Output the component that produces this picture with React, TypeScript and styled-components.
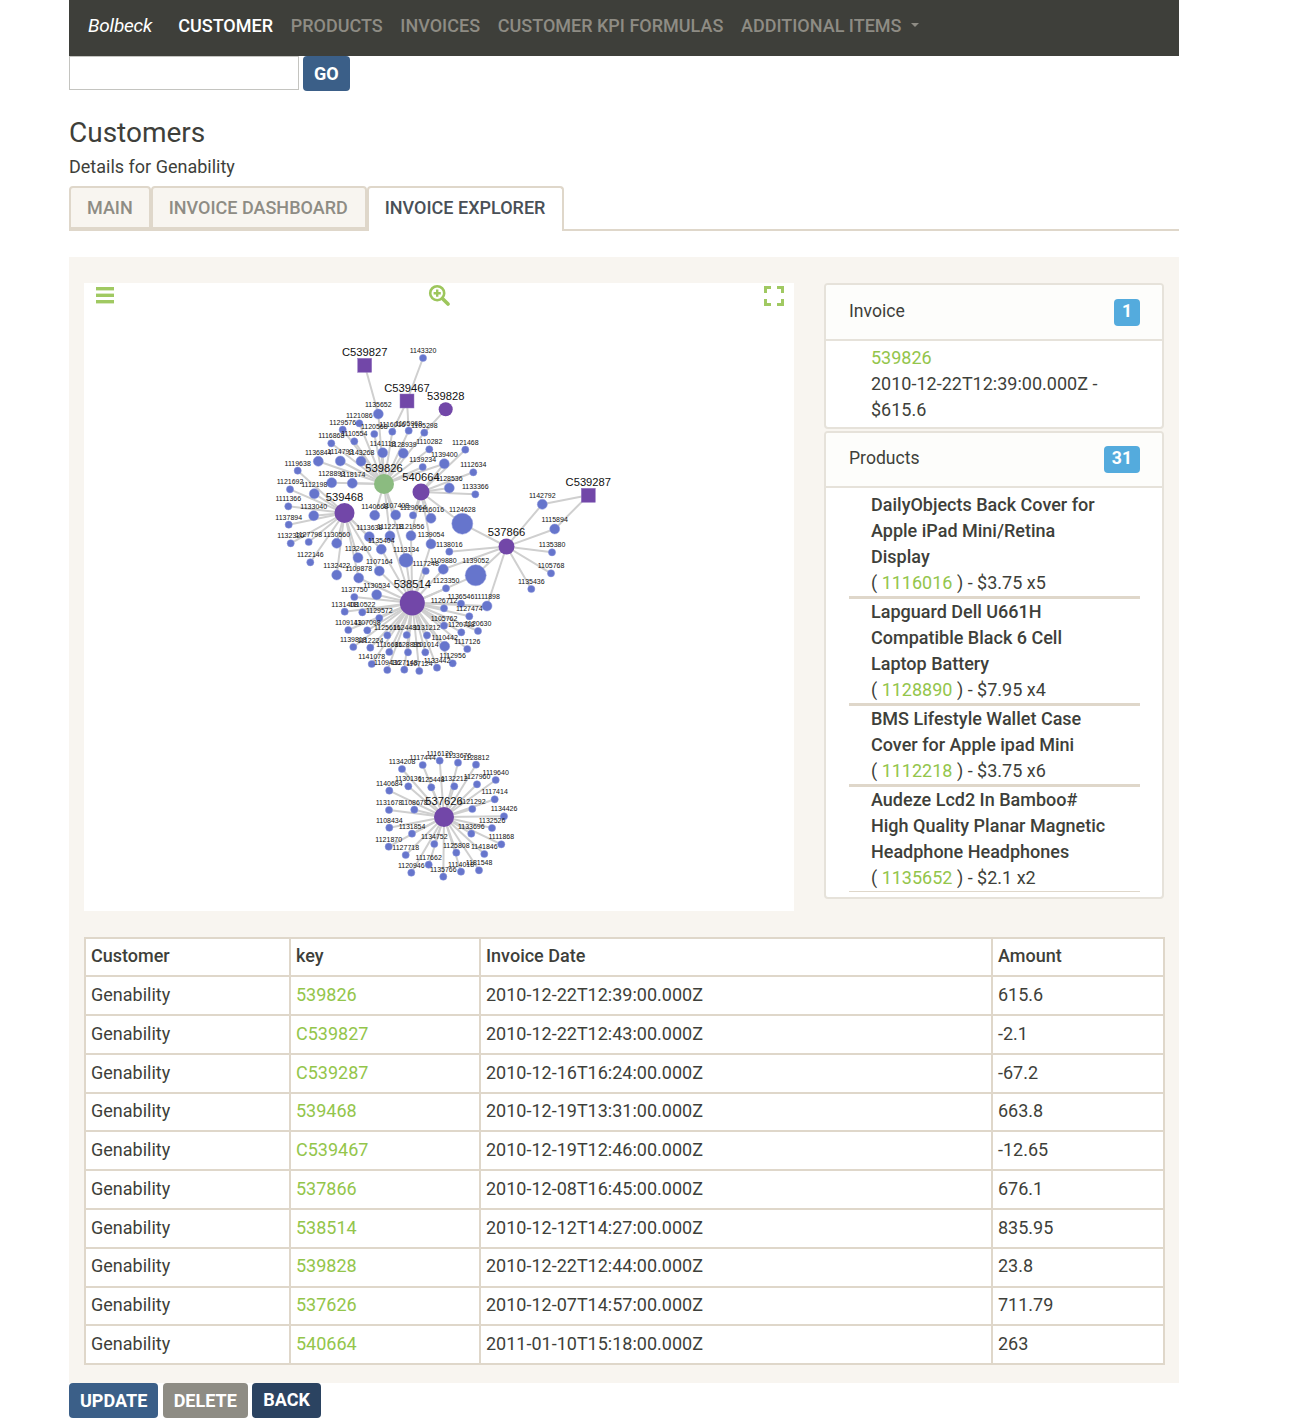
import React from 'react'
import styled, { createGlobalStyle } from 'styled-components'

const GlobalStyle = createGlobalStyle`
  html, body {
    margin: 0;
    padding: 0;
    background: #fff;
    color: #3e3f3a;
    font-family: Roboto, "Liberation Sans", sans-serif;
    font-size: 18px;
    line-height: 26.4px;
  }
  * { box-sizing: border-box; }
`

const Page = styled.div`
  width: 1110px;
  margin-left: 69px;
`

const Navbar = styled.nav`
  display: flex;
  align-items: center;
  height: 56px;
  padding: 0 0 4px 19px;
  background: #3e3f3a;
`

const Brand = styled.a`
  margin-right: 26px;
  color: #fff;
  font-size: 19px;
  font-style: italic;
  letter-spacing: -0.2px;
`

const NavItems = styled.div`
  display: flex;
  gap: 17.7px;
`

const NavItem = styled.a<{ $active?: boolean }>`
  display: flex;
  align-items: center;
  color: ${(p) => (p.$active ? '#fff' : '#8e8c84')};
  font-size: 18px;
  font-weight: 500;
  text-transform: uppercase;
`

const Caret = styled.span`
  width: 0;
  height: 0;
  margin-left: 10px;
  margin-bottom: 2px;
  border-top: 4.5px solid #8e8c84;
  border-left: 4.5px solid transparent;
  border-right: 4.5px solid transparent;
`

const SearchRow = styled.form`
  display: flex;
  gap: 4px;
  height: 35px;
`

const SearchInput = styled.input`
  width: 230px;
  height: 34px;
  border: 1px solid #c4c4c0;
  background: #fff;
`

const Button = styled.button<{ $color: string; $up?: boolean }>`
  height: 35px;
  padding: 0 11px ${(p) => (p.$up ? '3px' : '1px')};
  border: 0;
  border-radius: 4px;
  background: ${(p) => p.$color};
  color: #fff;
  font-family: inherit;
  font-size: 18px;
  font-weight: 700;
  text-transform: uppercase;
`

const Title = styled.h2`
  margin: 24px 0 0;
  font-size: 28px;
  font-weight: 400;
  line-height: 36px;
`

const Subtitle = styled.p`
  margin: 3px 0 0;
  line-height: 26px;
`

const Tabs = styled.div`
  display: flex;
  height: 45px;
  margin-top: 6px;
  border-bottom: 2px solid #dfd7ca;
`

const Tab = styled.a<{ $active?: boolean }>`
  display: flex;
  align-items: center;
  height: ${(p) => (p.$active ? '45px' : '43px')};
  padding: ${(p) => (p.$active ? '0' : '1px')} 16px ${(p) => (p.$active ? '2px' : '0')} 16px;
  border: 2px solid #dfd7ca;
  border-bottom: ${(p) => (p.$active ? '0' : '2px solid #dfd7ca')};
  border-radius: 4px 4px 0 0;
  background: ${(p) => (p.$active ? '#fff' : '#f8f5f0')};
  color: ${(p) => (p.$active ? '#495057' : '#8e8c84')};
  font-size: 18px;
  font-weight: 500;
  text-transform: uppercase;

  & + & {
    padding-right: 17px;
  }
`

const Panel = styled.section`
  margin-top: 26px;
  padding: 26px 15px 18px;
  background: #f8f5f0;
`

const TopRow = styled.div`
  display: grid;
  grid-template-columns: 710px 340px;
  gap: 30px;
`

const GraphBox = styled.div`
  position: relative;
  height: 628px;
  background: #fff;
`

const GraphSvg = styled.svg`
  display: block;
`

const ToolIcon = styled.svg<{ $left: number; $top: number }>`
  position: absolute;
  left: ${(p) => p.$left}px;
  top: ${(p) => p.$top}px;
`

const SideColumn = styled.div`
  display: flex;
  flex-direction: column;
  gap: 2px;
`

const Card = styled.div<{ $height: number }>`
  height: ${(p) => p.$height}px;
  overflow: hidden;
  border: 2px solid #e6e2da;
  border-radius: 4px;
  background: #fff;
`

const CardHeader = styled.div<{ $height: number }>`
  display: flex;
  align-items: center;
  justify-content: space-between;
  height: ${(p) => p.$height}px;
  padding: 0 22px 0 23px;
  border-bottom: 2px solid #e6e2da;
  background: #fdfdfb;
  font-size: 17.6px;
`

const CardTitle = styled.span`
  margin-bottom: 2px;
`

const Badge = styled.span`
  min-width: 25px;
  height: 27px;
  padding: 0 8px;
  border-radius: 4px;
  background: #54abdd;
  color: #fff;
  font-size: 17.6px;
  font-weight: 700;
  line-height: 24px;
  text-align: center;
`

const ItemList = styled.ul<{ $top: number }>`
  margin: 0;
  padding: ${(p) => p.$top}px 22px 0 23px;
  list-style: none;
  line-height: 26px;
`

const Item = styled.li<{ $rule?: number }>`
  padding-left: 22px;
  border-bottom: ${(p) => p.$rule ?? 3}px solid #dfd7ca;
`

const PlainItem = styled.li`
  padding-left: 22px;
`

const ProductName = styled.div`
  max-width: 245px;
  font-weight: 500;
`

const Link = styled.a`
  color: #93c54b;
`

const DataTable = styled.table`
  width: 1079px;
  margin-top: 26px;
  border-collapse: collapse;
  table-layout: fixed;
  background: #fff;

  th, td {
    padding: 4.7px 5px 5.7px;
    border: 2px solid #dfd7ca;
    font-weight: 400;
    text-align: left;
  }

  th {
    padding: 4.2px 5px 5.7px;
    font-weight: 500;
  }
`

const Actions = styled.div`
  display: flex;
  gap: 4.4px;
`

type Leaf = [number, number, number, string, string]

const hubs: Record<string, { x: number; y: number; r: number; label: string; kind: 'square' | 'circle' | 'green' }> = {
  s: { x: 364.7, y: 365.3, r: 7, label: 'C539827', kind: 'square' },
  t: { x: 407, y: 401, r: 7, label: 'C539467', kind: 'square' },
  u: { x: 588.3, y: 495.3, r: 7, label: 'C539287', kind: 'square' },
  g: { x: 445.7, y: 409.3, r: 7, label: '539828', kind: 'circle' },
  a: { x: 384, y: 484, r: 10, label: '539826', kind: 'green' },
  b: { x: 421, y: 492, r: 8.5, label: '540664', kind: 'circle' },
  c: { x: 344.5, y: 513, r: 10, label: '539468', kind: 'circle' },
  d: { x: 412.3, y: 603, r: 12.5, label: '538514', kind: 'circle' },
  e: { x: 506.5, y: 546.5, r: 8, label: '537866', kind: 'circle' },
  f: { x: 444, y: 817, r: 10, label: '537626', kind: 'circle' }
}

// x, y, radius, label, parent hubs
const leaves: Leaf[] = [
  [423, 358, 3.6, '1143320', 't'],
  [378.3, 414, 5, '1135652', 'sa'],
  [359.3, 423.3, 3.6, '1121086', 'a'],
  [342.7, 429.7, 3.6, '1129576', 'a'],
  [374.3, 434, 3.6, '1120568', 'a'],
  [392.3, 431.7, 3.6, '1116016', 'ta'],
  [408.7, 430.7, 3.6, '1105968', 'ta'],
  [424.3, 432.7, 3.6, '1105298', 'ga'],
  [331.3, 443.3, 3.6, '1116868', 'a'],
  [354.3, 441.3, 3.6, '1110554', 'a'],
  [382.7, 452.7, 5, '1141118', 'a'],
  [403.3, 453.3, 5, '1128939', 'a'],
  [429.3, 449.3, 3.6, '1110282', 'a'],
  [465.3, 449.7, 3.6, '1121468', 'b'],
  [318.3, 461.3, 5, '1136844', 'a'],
  [340.3, 461, 5, '1114793', 'a'],
  [361, 461.3, 5, '1143268', 'a'],
  [297.7, 470.7, 3.6, '1119638', 'c'],
  [422.7, 467, 3.6, '1139234', 'a'],
  [444.3, 463.7, 5, '1139400', 'ab'],
  [473.3, 472.3, 3.6, '1112634', 'b'],
  [331.7, 482.7, 5, '1128893', 'a'],
  [352.3, 483.3, 5, '1118174', 'a'],
  [290, 489.3, 3.6, '1121692', 'c'],
  [314.3, 493.7, 5, '1112198', 'c'],
  [449.3, 488, 5, '1128536', 'b'],
  [475.3, 494.3, 3.6, '1133366', 'b'],
  [288.3, 506.3, 3.6, '1111366', 'c'],
  [313.7, 515.7, 5, '1133040', 'c'],
  [374.7, 515.3, 5, '1140668', 'a'],
  [395.7, 515, 5, '1107408', 'a'],
  [413, 515.3, 3.6, '1129064', 'b'],
  [431, 518.3, 5, '1116016', 'b'],
  [462.3, 523.7, 10.5, '1124628', 'be'],
  [288.7, 524.7, 3.6, '1137894', 'c'],
  [542.3, 504.3, 5, '1142792', 'ue'],
  [554.7, 529, 5, '1115894', 'ue'],
  [290.7, 543.3, 3.6, '1132320', 'c'],
  [308.7, 542, 3.6, '1127798', 'c'],
  [336.7, 543.3, 5, '1130560', 'c'],
  [369.3, 536.7, 5, '1113638', 'c'],
  [390, 536, 5, '1112218', 'ad'],
  [411, 535.7, 5, '1121956', 'bd'],
  [431, 544, 5, '1139054', 'bd'],
  [381.3, 549.3, 5, '1135404', 'cd'],
  [358, 557.7, 5, '1132460', 'c'],
  [406, 560.3, 7, '1113134', 'ad'],
  [449.3, 551.7, 3.6, '1138016', 'e'],
  [552, 552.3, 3.6, '1135380', 'e'],
  [310.3, 562.3, 3.6, '1122146', 'c'],
  [379.3, 571, 5, '1107164', 'cd'],
  [425.7, 571, 3.6, '1117248', 'd'],
  [443.3, 569.3, 5, '1109880', 'de'],
  [475.7, 575.3, 10.5, '1139052', 'de'],
  [551, 573.3, 3.6, '1105768', 'e'],
  [336.7, 575, 5, '1132422', 'c'],
  [358.7, 578, 5, '1109878', 'cd'],
  [531.3, 589, 3.6, '1135436', 'e'],
  [446, 588.3, 3.6, '1123350', 'd'],
  [376.7, 594.7, 5, '1130534', 'd'],
  [354.3, 597, 3.6, '1137750', 'd'],
  [461, 603.7, 3.6, '1136546', 'd'],
  [487, 606, 5, '1111898', 'de'],
  [444, 608.3, 3.6, '1126712', 'd'],
  [344.7, 611.7, 3.6, '1131408', 'd'],
  [362.3, 612.3, 3.6, '1110522', 'd'],
  [469.3, 616.3, 3.6, '1127474', 'd'],
  [379.3, 618, 3.6, '1129572', 'd'],
  [444, 625.7, 3.6, '1105762', 'd'],
  [461.3, 632.3, 3.6, '1120718', 'd'],
  [478, 631, 3.6, '1120630', 'd'],
  [348.3, 630, 3.6, '1109143', 'd'],
  [367.3, 630.3, 3.6, '1107098', 'd'],
  [387.3, 635.3, 3.6, '1125616', 'd'],
  [406.7, 635, 3.6, '1124480', 'd'],
  [427, 635.3, 3.6, '1131212', 'd'],
  [444.7, 646.3, 5, '1110442', 'd'],
  [467.3, 649, 3.6, '1117126', 'd'],
  [353.3, 647, 3.6, '1139818', 'd'],
  [370.3, 647.7, 3.6, '1112224', 'd'],
  [389.3, 652, 3.6, '1116686', 'd'],
  [408, 652.3, 3.6, '1128895', 'd'],
  [425.3, 652.3, 3.6, '1101014', 'd'],
  [452.7, 663.3, 3.6, '1112956', 'd'],
  [371.7, 664, 3.6, '1141078', 'd'],
  [387.3, 670, 3.6, '1109436', 'd'],
  [404.3, 669.7, 3.6, '1127148', 'd'],
  [419.3, 671, 3.6, '1107124', 'd'],
  [437, 667.7, 3.6, '1133442', 'd'],
  [439.7, 760.7, 3.6, '1116120', 'f'],
  [458, 762.7, 3.6, '1133676', 'f'],
  [476, 764.7, 3.6, '1128812', 'f'],
  [422.7, 765, 3.6, '1117444', 'f'],
  [402, 769, 3.6, '1134208', 'f'],
  [408.3, 786.3, 3.6, '1130136', 'f'],
  [431.3, 787.3, 3.6, '1125448', 'f'],
  [454.3, 786.3, 3.6, '1132212', 'f'],
  [477, 784.3, 3.6, '1127960', 'f'],
  [495.7, 780, 3.6, '1119640', 'f'],
  [389.3, 790.7, 3.6, '1140684', 'f'],
  [494.7, 799.3, 3.6, '1117414', 'f'],
  [389, 810, 3.6, '1131678', 'f'],
  [414.3, 809.7, 3.6, '1108678', 'f'],
  [472.3, 809, 3.6, '1121292', 'f'],
  [504, 816.3, 3.6, '1134426', 'f'],
  [389.3, 827.7, 3.6, '1108434', 'f'],
  [412, 833.7, 3.6, '1131854', 'f'],
  [492, 828, 3.6, '1132526', 'f'],
  [471.3, 833.7, 3.6, '1133696', 'f'],
  [434.3, 844, 3.6, '1134752', 'f'],
  [456.3, 852.7, 3.6, '1125808', 'f'],
  [484.3, 854, 3.6, '1141846', 'f'],
  [501.3, 844.3, 3.6, '1111868', 'f'],
  [388.7, 846.7, 3.6, '1121870', 'f'],
  [405.7, 855, 3.6, '1127718', 'f'],
  [428.7, 864.7, 3.6, '1117662', 'f'],
  [411.3, 872.7, 3.6, '1120946', 'f'],
  [461, 871.7, 3.6, '1114018', 'f'],
  [443.3, 876.7, 3.6, '1135766', 'f'],
  [479, 870.3, 3.6, '1181548', 'f']
]

const PURPLE = '#7247a8'
const BLUE = '#6675cc'

function Graph() {
  return (
    <GraphSvg width='710' height='628' viewBox='84 283 710 628'>
      <g stroke='#cfcfcf' strokeWidth='2'>
        {leaves.flatMap(([x, y, , label, parents], i) =>
          parents.split('').map((k) => <line key={`${i}${label}${k}`} x1={x} y1={y} x2={hubs[k].x} y2={hubs[k].y} />)
        )}
      </g>
      {leaves.map(([x, y, r, label], i) => (
        <circle key={`${i}${label}`} cx={x} cy={y} r={r} fill={BLUE} stroke='#8f99dc' strokeWidth='0.5' />
      ))}
      {Object.values(hubs).map((h) =>
        h.kind === 'square' ? (
          <rect key={h.label} x={h.x - h.r} y={h.y - h.r} width={h.r * 2} height={h.r * 2} fill={PURPLE} stroke='#9478c2' strokeWidth='0.5' />
        ) : (
          <circle key={h.label} cx={h.x} cy={h.y} r={h.r} fill={h.kind === 'green' ? '#8bbb80' : PURPLE} />
        )
      )}
      <g fontFamily='"Liberation Sans", sans-serif' fill='#111' textAnchor='middle'>
        {leaves.map(([x, y, r, label], i) => (
          <text key={`${i}${label}`} x={x} y={y - r - 1.6} fontSize='7'>
            {label}
          </text>
        ))}
        {Object.values(hubs).map((h) => (
          <text key={h.label} x={h.x} y={h.y - h.r - 2.5} fontSize='11.2'>
            {h.label}
          </text>
        ))}
      </g>
    </GraphSvg>
  )
}

const products = [
  { name: 'DailyObjects Back Cover for Apple iPad Mini/Retina Display', id: '1116016', rest: ' ) - $3.75 x5', rule: 3 },
  { name: 'Lapguard Dell U661H Compatible Black 6 Cell Laptop Battery', id: '1128890', rest: ' ) - $7.95 x4', rule: 3 },
  { name: 'BMS Lifestyle Wallet Case Cover for Apple ipad Mini', id: '1112218', rest: ' ) - $3.75 x6', rule: 3 },
  { name: 'Audeze Lcd2 In Bamboo# High Quality Planar Magnetic Headphone Headphones', id: '1135652', rest: ' ) - $2.1 x2', rule: 1 }
]

const invoices = [
  ['539826', '2010-12-22T12:39:00.000Z', '615.6'],
  ['C539827', '2010-12-22T12:43:00.000Z', '-2.1'],
  ['C539287', '2010-12-16T16:24:00.000Z', '-67.2'],
  ['539468', '2010-12-19T13:31:00.000Z', '663.8'],
  ['C539467', '2010-12-19T12:46:00.000Z', '-12.65'],
  ['537866', '2010-12-08T16:45:00.000Z', '676.1'],
  ['538514', '2010-12-12T14:27:00.000Z', '835.95'],
  ['539828', '2010-12-22T12:44:00.000Z', '23.8'],
  ['537626', '2010-12-07T14:57:00.000Z', '711.79'],
  ['540664', '2011-01-10T15:18:00.000Z', '263']
]

export default function App() {
  return (
    <Page>
      <GlobalStyle />
      <Navbar>
        <Brand>Bolbeck</Brand>
        <NavItems>
          <NavItem $active>Customer</NavItem>
          <NavItem>Products</NavItem>
          <NavItem>Invoices</NavItem>
          <NavItem>Customer KPI Formulas</NavItem>
          <NavItem>
            Additional Items
            <Caret />
          </NavItem>
        </NavItems>
      </Navbar>

      <SearchRow>
        <SearchInput type='text' />
        <Button type='button' $color='#3b5f88'>
          Go
        </Button>
      </SearchRow>

      <Title>Customers</Title>
      <Subtitle>Details for Genability</Subtitle>

      <Tabs>
        <Tab>Main</Tab>
        <Tab>Invoice Dashboard</Tab>
        <Tab $active>Invoice Explorer</Tab>
      </Tabs>

      <Panel>
        <TopRow>
          <GraphBox>
            <Graph />
            <ToolIcon $left={12} $top={3} width='18' height='18' viewBox='0 0 18 18' fill='#a0c962'>
              <rect y='1' width='18' height='3.4' />
              <rect y='7.6' width='18' height='3.4' />
              <rect y='14' width='18' height='3.4' />
            </ToolIcon>
            <ToolIcon $left={344} $top={1} width='22' height='22' viewBox='0 0 22 22' fill='none' stroke='#9dc65c'>
              <circle cx='9.2' cy='9.2' r='7' strokeWidth='2.6' />
              <path d='M14.4 14.4 20 20' strokeWidth='3.6' strokeLinecap='round' />
              <path d='M9.2 5.6v7.2M5.6 9.2h7.2' strokeWidth='2.4' />
            </ToolIcon>
            <ToolIcon $left={680} $top={3} width='20' height='20' viewBox='0 0 20 20' fill='none' stroke='#a0c962' strokeWidth='3'>
              <path d='M1.5 7V1.5H7M13 1.5h5.5V7M18.5 13v5.5H13M7 18.5H1.5V13' />
            </ToolIcon>
          </GraphBox>

          <SideColumn>
            <Card $height={146}>
              <CardHeader $height={56}>
                <CardTitle>Invoice</CardTitle>
                <Badge>1</Badge>
              </CardHeader>
              <ItemList $top={4}>
                <PlainItem>
                  <Link>539826</Link>
                  <br />
                  2010-12-22T12:39:00.000Z - $615.6
                </PlainItem>
              </ItemList>
            </Card>
            <Card $height={468}>
              <CardHeader $height={55}>
                <CardTitle>Products</CardTitle>
                <Badge>31</Badge>
              </CardHeader>
              <ItemList $top={4}>
                {products.map((p) => (
                  <Item key={p.id} $rule={p.rule}>
                    <ProductName>{p.name}</ProductName>
                    ( <Link>{p.id}</Link>
                    {p.rest}
                  </Item>
                ))}
              </ItemList>
            </Card>
          </SideColumn>
        </TopRow>

        <DataTable>
          <colgroup>
            <col width='205' />
            <col width='190' />
            <col width='512' />
            <col width='172' />
          </colgroup>
          <thead>
            <tr>
              <th>Customer</th>
              <th>key</th>
              <th>Invoice Date</th>
              <th>Amount</th>
            </tr>
          </thead>
          <tbody>
            {invoices.map(([key, date, amount]) => (
              <tr key={key}>
                <td>Genability</td>
                <td>
                  <Link>{key}</Link>
                </td>
                <td>{date}</td>
                <td>{amount}</td>
              </tr>
            ))}
          </tbody>
        </DataTable>
      </Panel>

      <Actions>
        <Button type='button' $color='#3b5f88'>
          Update
        </Button>
        <Button type='button' $color='#8e8c84'>
          Delete
        </Button>
        <Button type='button' $color='#2b4361' $up>
          Back
        </Button>
      </Actions>
    </Page>
  )
}
